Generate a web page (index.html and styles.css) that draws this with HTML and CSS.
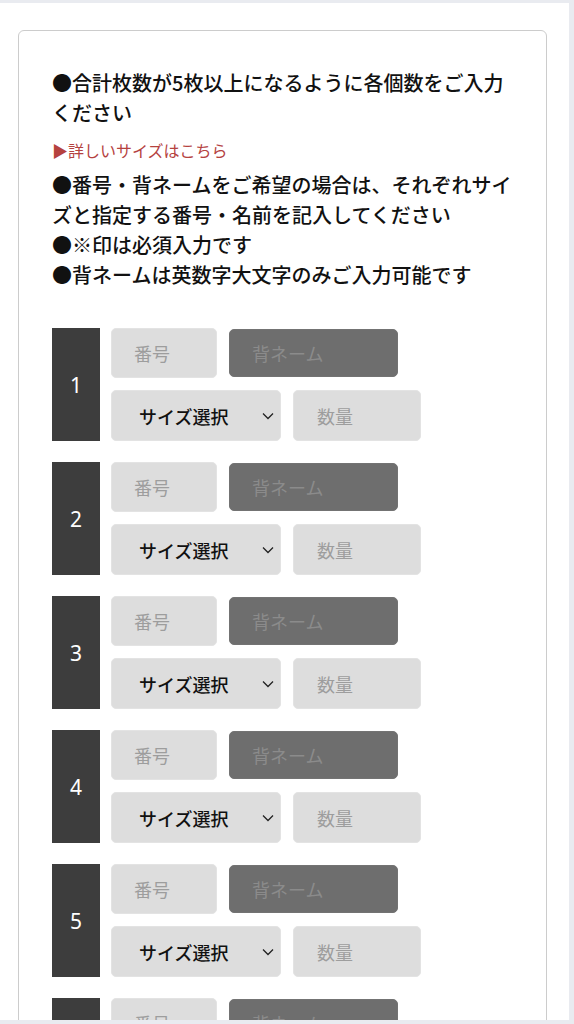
FILE: index.html
```html
<!DOCTYPE html>
<html lang="ja">
<head>
<meta charset="utf-8">
<title>注文フォーム</title>
<link rel="stylesheet" href="styles.css">
</head>
<body>
<div class="page">
  <div class="card">
    <p class="note">●合計枚数が5枚以上になるように各個数をご入力ください</p>
    <a class="size-link" href="#">▶詳しいサイズはこちら</a>
    <p class="note notes">●番号・背ネームをご希望の場合は、それぞれサイズと指定する番号・名前を記入してください<br>●※印は必須入力です<br>●背ネームは英数字大文字のみご入力可能です</p>

    <div class="items">
      <div class="item">
        <div class="idx">1</div>
        <div class="fields">
          <div class="row">
            <input class="field f-num" type="text" placeholder="番号">
            <input class="field f-name" type="text" placeholder="背ネーム">
          </div>
          <div class="row">
            <div class="field f-size"><span>サイズ選択</span><svg class="chev" width="12" height="8" viewBox="0 0 12 8"><path d="M1 1.5 L6 6.5 L11 1.5" fill="none" stroke="#222" stroke-width="1.3"/></svg></div>
            <input class="field f-qty" type="text" placeholder="数量">
          </div>
        </div>
      </div>
      <div class="item">
        <div class="idx">2</div>
        <div class="fields">
          <div class="row">
            <input class="field f-num" type="text" placeholder="番号">
            <input class="field f-name" type="text" placeholder="背ネーム">
          </div>
          <div class="row">
            <div class="field f-size"><span>サイズ選択</span><svg class="chev" width="12" height="8" viewBox="0 0 12 8"><path d="M1 1.5 L6 6.5 L11 1.5" fill="none" stroke="#222" stroke-width="1.3"/></svg></div>
            <input class="field f-qty" type="text" placeholder="数量">
          </div>
        </div>
      </div>
      <div class="item">
        <div class="idx">3</div>
        <div class="fields">
          <div class="row">
            <input class="field f-num" type="text" placeholder="番号">
            <input class="field f-name" type="text" placeholder="背ネーム">
          </div>
          <div class="row">
            <div class="field f-size"><span>サイズ選択</span><svg class="chev" width="12" height="8" viewBox="0 0 12 8"><path d="M1 1.5 L6 6.5 L11 1.5" fill="none" stroke="#222" stroke-width="1.3"/></svg></div>
            <input class="field f-qty" type="text" placeholder="数量">
          </div>
        </div>
      </div>
      <div class="item">
        <div class="idx">4</div>
        <div class="fields">
          <div class="row">
            <input class="field f-num" type="text" placeholder="番号">
            <input class="field f-name" type="text" placeholder="背ネーム">
          </div>
          <div class="row">
            <div class="field f-size"><span>サイズ選択</span><svg class="chev" width="12" height="8" viewBox="0 0 12 8"><path d="M1 1.5 L6 6.5 L11 1.5" fill="none" stroke="#222" stroke-width="1.3"/></svg></div>
            <input class="field f-qty" type="text" placeholder="数量">
          </div>
        </div>
      </div>
      <div class="item">
        <div class="idx">5</div>
        <div class="fields">
          <div class="row">
            <input class="field f-num" type="text" placeholder="番号">
            <input class="field f-name" type="text" placeholder="背ネーム">
          </div>
          <div class="row">
            <div class="field f-size"><span>サイズ選択</span><svg class="chev" width="12" height="8" viewBox="0 0 12 8"><path d="M1 1.5 L6 6.5 L11 1.5" fill="none" stroke="#222" stroke-width="1.3"/></svg></div>
            <input class="field f-qty" type="text" placeholder="数量">
          </div>
        </div>
      </div>
      <div class="item">
        <div class="idx">6</div>
        <div class="fields">
          <div class="row">
            <input class="field f-num" type="text" placeholder="番号">
            <input class="field f-name" type="text" placeholder="背ネーム">
          </div>
          <div class="row">
            <div class="field f-size"><span>サイズ選択</span><svg class="chev" width="12" height="8" viewBox="0 0 12 8"><path d="M1 1.5 L6 6.5 L11 1.5" fill="none" stroke="#222" stroke-width="1.3"/></svg></div>
            <input class="field f-qty" type="text" placeholder="数量">
          </div>
        </div>
      </div>
    </div>
  </div>
</div>
</body>
</html>
```

FILE: styles.css
```css
html, body {
  margin: 0;
  padding: 0;
  height: 1024px;
  overflow: hidden;
  background: #e9ebf0;
}

body {
  font-family: "Noto Sans CJK JP", "Noto Sans", sans-serif;
  color: #111;
}

.page {
  margin: 3px 5px 0 0;
  height: 1017px;
  overflow: hidden;
  background: #fff;
}

.card {
  margin: 27px 22px 0 18px;
  border: 1px solid #cccccc;
  border-radius: 6px;
  padding: 37px 30px 40px 33px;
}

.note {
  margin: 0;
  font-size: 20px;
  line-height: 30px;
  font-weight: 500;
  color: #111;
}

.size-link {
  display: block;
  margin-top: 10px;
  font-size: 16px;
  line-height: 24px;
  color: #b5423f;
  text-decoration: none;
}

.notes {
  margin-top: 8px;
}

.items {
  margin-top: 38px;
  display: flex;
  flex-direction: column;
  gap: 21px;
}

.item {
  display: flex;
  gap: 11px;
}

.idx {
  width: 48px;
  height: 113px;
  background: #3d3d3d;
  color: #fff;
  font-family: "Noto Sans", "Noto Sans CJK JP", sans-serif;
  font-size: 21px;
  display: flex;
  align-items: center;
  justify-content: center;
}

.fields {
  display: flex;
  flex-direction: column;
  gap: 12px;
}

.row {
  display: flex;
  gap: 12px;
  align-items: center;
}

.field {
  box-sizing: border-box;
  height: 50px;
  margin: 0;
  border: 1px solid #e3e3e3;
  border-radius: 5px;
  background: #dddddd;
  font-family: "Noto Sans CJK JP", "Noto Sans", sans-serif;
  font-size: 18px;
  color: #111;
  padding: 0 0 0 22px;
  outline: none;
}

.field::placeholder {
  color: #9d9d9d;
}

.f-num {
  width: 106px;
}

.f-name {
  width: 169px;
  height: 48px;
  background: #6e6e6e;
  border-color: #737373;
}

.f-name::placeholder {
  color: #8b8b8b;
}

.f-size {
  width: 170px;
  height: 51px;
  display: flex;
  align-items: center;
  justify-content: space-between;
  padding: 0 6px 0 27px;
}

.f-size span {
  color: #111;
  font-weight: 500;
}

.chev {
  display: block;
  margin-top: 1px;
}

.f-qty {
  width: 128px;
  height: 51px;
  padding-left: 23px;
}
```
